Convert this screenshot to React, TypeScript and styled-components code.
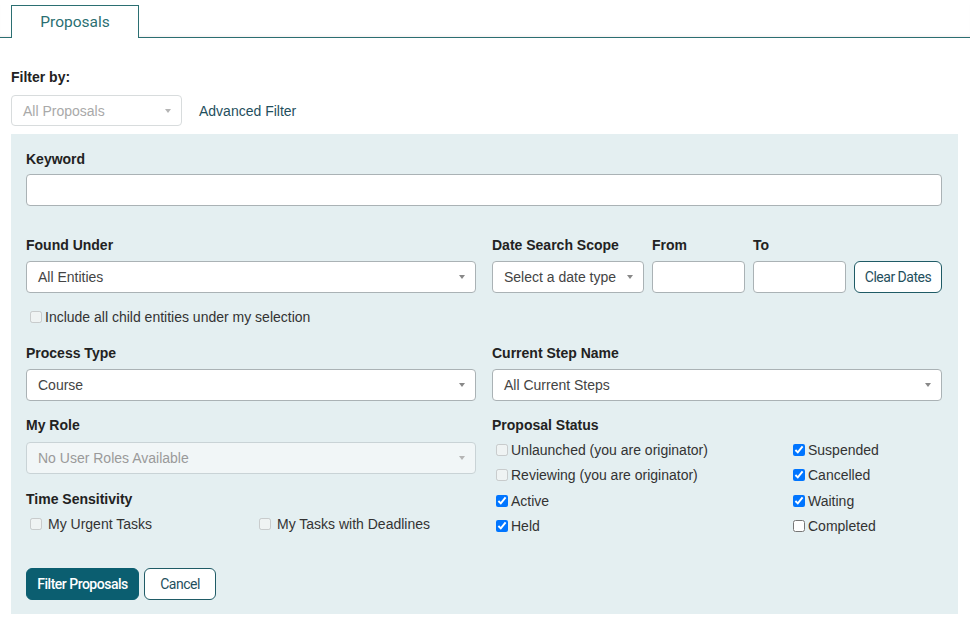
import React from 'react'
import styled, { createGlobalStyle, css } from 'styled-components'

const GlobalStyle = createGlobalStyle`
  html, body {
    margin: 0;
    padding: 0;
    background: #ffffff;
    font-family: "Liberation Sans", Arial, sans-serif;
    font-size: 14px;
    color: #333333;
  }
`

const Page = styled.div`
  padding-top: 5px;
`

const TabBar = styled.div`
  display: flex;
  padding-left: 11px;
  border-bottom: 1px solid #2b6f72;
  box-shadow: 0 -2px 3px -2px rgba(170, 120, 120, 0.25) inset;
`

const Tab = styled.div`
  width: 126px;
  height: 32px;
  border: 1px solid #2b6f72;
  border-bottom: none;
  background: #ffffff;
  margin-bottom: -1px;
  display: flex;
  align-items: center;
  justify-content: center;
  font-family: Roboto, "Liberation Sans", sans-serif;
  font-size: 15.5px;
  color: #2b6f72;
`

const Content = styled.main`
  padding: 31px 12px 0 11px;
`

const FilterByLabel = styled.div`
  font-weight: bold;
  color: #222222;
  line-height: 16px;
  margin-bottom: 10px;
`

const FilterByRow = styled.div`
  display: flex;
  align-items: center;
  gap: 17px;
  margin-bottom: 8px;
`

const Link = styled.a`
  color: #1f4f5d;
  text-decoration: none;
  font-size: 14px;
`

const Panel = styled.section`
  background: #e4eff1;
  padding: 17px 16px 14px 15px;
`

const Label = styled.div<{ $gap?: number }>`
  font-weight: bold;
  color: #222222;
  line-height: 16px;
  white-space: nowrap;
  margin-bottom: ${(p) => p.$gap ?? 8}px;
`

const TextInput = styled.input`
  box-sizing: border-box;
  display: block;
  width: 100%;
  height: 32px;
  border: 1px solid #aab2b5;
  border-radius: 4px;
  background: #ffffff;
  outline: none;
`

const fieldBox = css`
  box-sizing: border-box;
  position: relative;
  height: 32px;
  border: 1px solid #aab2b5;
  border-radius: 4px;
  display: flex;
  align-items: center;
  padding: 0 24px 0 11px;
  white-space: nowrap;
  overflow: hidden;
`

const Select = styled.div<{ $disabled?: boolean; $width?: number }>`
  ${fieldBox}
  width: ${(p) => (p.$width ? `${p.$width}px` : '100%')};
  background: ${(p) => (p.$disabled ? '#f1f6f7' : '#ffffff')};
  color: ${(p) => (p.$disabled ? '#9a9a9a' : '#444444')};
  border-color: ${(p) => (p.$disabled ? '#c9d3d6' : '#aab2b5')};

  &::after {
    content: '';
    position: absolute;
    right: 10px;
    top: 13px;
    border-top: 4px solid ${(p) => (p.$disabled ? '#b5b5b5' : '#888888')};
    border-left: 3px solid transparent;
    border-right: 3px solid transparent;
  }
`

const TopSelect = styled(Select)`
  height: 31px;
  border-color: #d8dcdd;
  background: #ffffff;
  color: #a9a9a9;
  padding-left: 11px;
`

const Block = styled.div<{ $top?: number }>`
  margin-top: ${(p) => p.$top ?? 0}px;
`

const TwoCols = styled.div<{ $top?: number }>`
  display: grid;
  grid-template-columns: 1fr 1fr;
  gap: 16px;
  margin-top: ${(p) => p.$top ?? 0}px;
`

const DateRow = styled.div`
  display: flex;
  align-items: flex-end;
  gap: 8px;
`

const DateField = styled.div<{ $width: number }>`
  width: ${(p) => p.$width}px;
  flex: none;
`

const OutlineButton = styled.button<{ $width?: number }>`
  box-sizing: border-box;
  height: 32px;
  width: ${(p) => (p.$width ? `${p.$width}px` : 'auto')};
  padding: 0;
  background: #ffffff;
  border: 1px solid #1f5b66;
  border-radius: 6px;
  color: #1f4f5d;
  font-family: Roboto, "Liberation Sans", sans-serif;
  font-size: 14px;
  letter-spacing: -0.5px;
  cursor: pointer;
`

const PrimaryButton = styled(OutlineButton)`
  background: #0b5e70;
  border-color: #0b5e70;
  color: #ffffff;
  font-weight: 500;
`

const CheckLabel = styled.label<{ $space?: number }>`
  display: flex;
  align-items: center;
  height: 25.33px;
  white-space: nowrap;
  color: #333333;

  input {
    margin: 0 ${(p) => p.$space ?? 3}px 0 4px;
    width: 12px;
    height: 12px;
  }
`

const TimeGrid = styled.div`
  display: grid;
  grid-template-columns: 229px 1fr;
`

const StatusGrid = styled.div`
  display: grid;
  grid-template-columns: 297px 1fr;
`

const Actions = styled.div`
  display: flex;
  gap: 5px;
  margin-top: 29px;
`

const statuses: { label: string; checked: boolean; disabled?: boolean }[] = [
  { label: 'Unlaunched (you are originator)', checked: false, disabled: true },
  { label: 'Suspended', checked: true },
  { label: 'Reviewing (you are originator)', checked: false, disabled: true },
  { label: 'Cancelled', checked: true },
  { label: 'Active', checked: true },
  { label: 'Waiting', checked: true },
  { label: 'Held', checked: true },
  { label: 'Completed', checked: false },
]

export default function App() {
  return (
    <Page>
      <GlobalStyle />
      <TabBar>
        <Tab>Proposals</Tab>
      </TabBar>
      <Content>
        <FilterByLabel>Filter by:</FilterByLabel>
        <FilterByRow>
          <TopSelect $width={171} $disabled>All Proposals</TopSelect>
          <Link href="#">Advanced Filter</Link>
        </FilterByRow>

        <Panel>
          <Label $gap={7}>Keyword</Label>
          <TextInput type="text" />

          <TwoCols $top={31}>
            <div>
              <Label>Found Under</Label>
              <Select>All Entities</Select>
            </div>
            <DateRow>
              <DateField $width={152}>
                <Label>Date Search Scope</Label>
                <Select>Select a date type</Select>
              </DateField>
              <DateField $width={93}>
                <Label>From</Label>
                <TextInput type="text" />
              </DateField>
              <DateField $width={93}>
                <Label>To</Label>
                <TextInput type="text" />
              </DateField>
              <OutlineButton $width={88}>Clear Dates</OutlineButton>
            </DateRow>
          </TwoCols>

          <Block $top={11}>
            <CheckLabel>
              <input type="checkbox" disabled />
              Include all child entities under my selection
            </CheckLabel>
          </Block>

          <TwoCols $top={16}>
            <div>
              <Label>Process Type</Label>
              <Select>Course</Select>
            </div>
            <div>
              <Label>Current Step Name</Label>
              <Select>All Current Steps</Select>
            </div>
          </TwoCols>

          <TwoCols $top={16}>
            <div>
              <Label $gap={9}>My Role</Label>
              <Select $disabled>No User Roles Available</Select>
              <Label $gap={4} style={{ marginTop: 17 }}>
                Time Sensitivity
              </Label>
              <TimeGrid>
                <CheckLabel $space={6}>
                  <input type="checkbox" disabled />
                  My Urgent Tasks
                </CheckLabel>
                <CheckLabel $space={6}>
                  <input type="checkbox" disabled />
                  My Tasks with Deadlines
                </CheckLabel>
              </TimeGrid>
            </div>
            <div>
              <Label $gap={4}>Proposal Status</Label>
              <StatusGrid>
                {statuses.map((s) => (
                  <CheckLabel key={s.label}>
                    <input type="checkbox" defaultChecked={s.checked} disabled={s.disabled} />
                    {s.label}
                  </CheckLabel>
                ))}
              </StatusGrid>
            </div>
          </TwoCols>

          <Actions>
            <PrimaryButton $width={113}>Filter Proposals</PrimaryButton>
            <OutlineButton $width={72}>Cancel</OutlineButton>
          </Actions>
        </Panel>
      </Content>
    </Page>
  )
}
